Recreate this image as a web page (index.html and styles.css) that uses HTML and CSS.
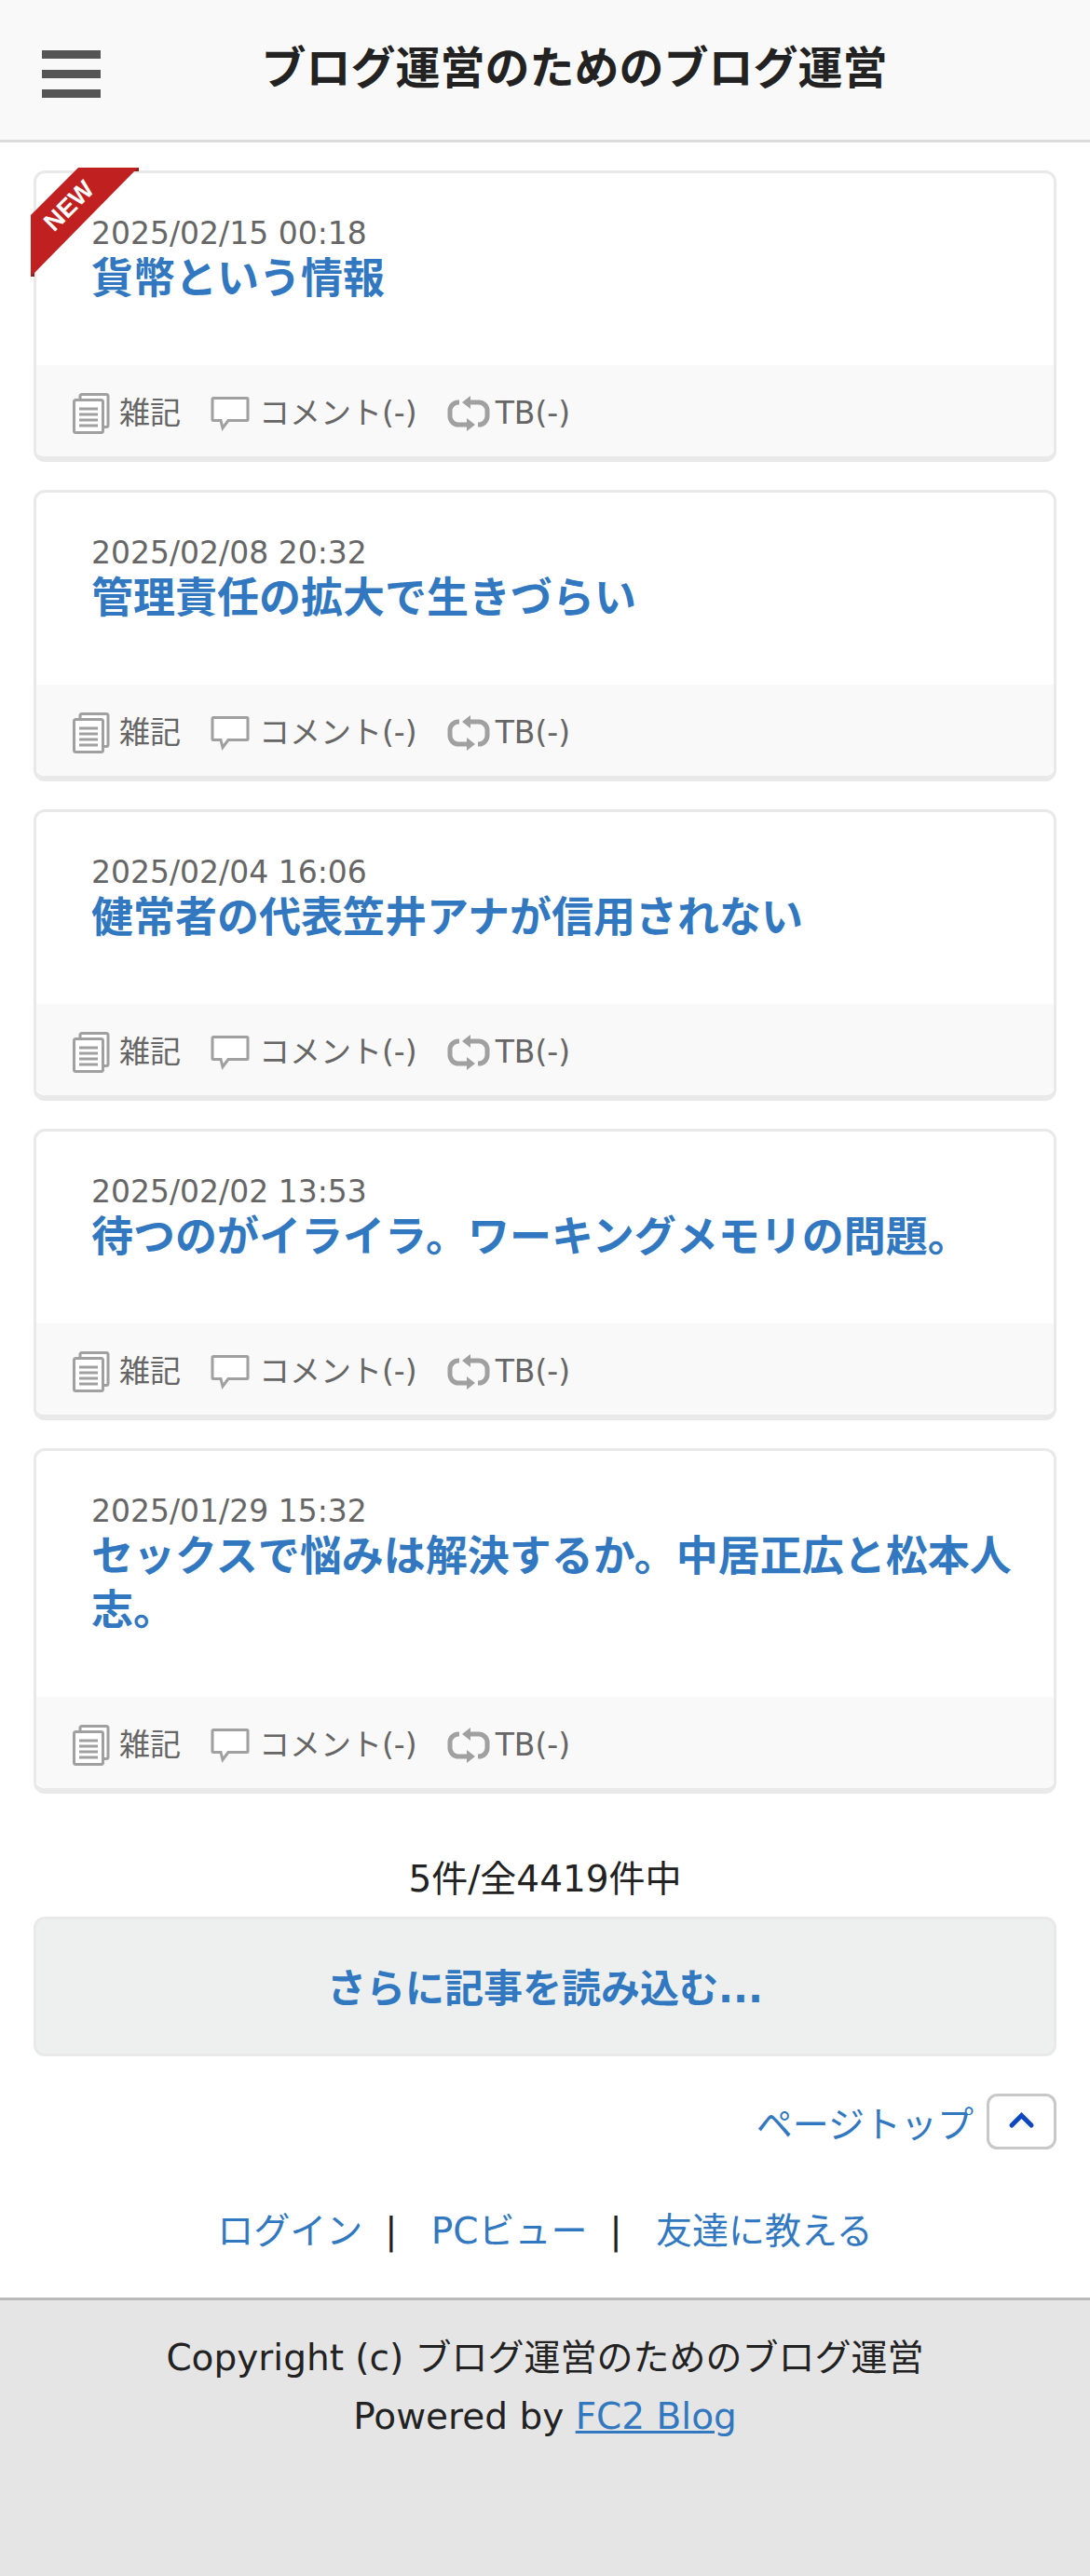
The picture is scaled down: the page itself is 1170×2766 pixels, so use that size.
FILE: index.html
```html
<!DOCTYPE html>
<html lang="ja">
<head>
  <meta charset="UTF-8">
  <meta name="viewport" content="width=device-width, initial-scale=1">
  <title>ブログ運営のためのブログ運営</title>
  <link rel="stylesheet" href="styles.css">
</head>
<body>
  <!-- icons -->
  <svg class="sprite" aria-hidden="true">
    <symbol id="icon-pages" viewBox="0 0 40 44">
      <path d="M8 6V3.5a2 2 0 0 1 2-2h26a2 2 0 0 1 2 2v31a2 2 0 0 1-2 2h-4" fill="#fff" stroke="#a0a0a0" stroke-width="3"/>
      <rect x="1.5" y="7.5" width="31" height="35" rx="2" fill="#fff" stroke="#a0a0a0" stroke-width="3"/>
      <path d="M7 17h20M7 23h20M7 29h20M7 35h20" stroke="#a0a0a0" stroke-width="3"/>
    </symbol>
    <symbol id="icon-comment" viewBox="0 0 42 38">
      <path d="M3 2.500h36a1 1 0 0 1 1 1v22a1 1 0 0 1-1 1H19l-6 8-2-8H3a1 1 0 0 1-1-1v-22a1 1 0 0 1 1-1z" fill="#fff" stroke="#a0a0a0" stroke-width="3"/>
    </symbol>
    <symbol id="icon-trackback" viewBox="0 0 46 38">
      <path d="M13 7h-1a9 9 0 0 0-9 9v6a9 9 0 0 0 9 9h9M33 31h1a9 9 0 0 0 9-9v-6a9 9 0 0 0-9-9h-9" fill="none" stroke="#a0a0a0" stroke-width="5"/>
      <path d="M16 7l9-7v14zM30 31l-9-7v14z" fill="#a0a0a0"/>
    </symbol>
  </svg>

  <header class="header">
    <button class="menu-btn" type="button" aria-label="メニュー">
      <span class="bar"></span>
      <span class="bar"></span>
      <span class="bar"></span>
    </button>
    <h1 class="blog-title">ブログ運営のためのブログ運営</h1>
  </header>

  <main class="main">
    <article class="entry">
      <svg class="new" viewBox="0 0 116 117">
        <path d="M108 0h8v4h-8zM0 109h4v8h-4z" fill="#8c2020"/>
        <path d="M51 0h64L4 113l-4 3V51z" fill="#c12020"/>
        <text x="41" y="50" transform="rotate(-45 41 41)" text-anchor="middle">NEW</text>
      </svg>
      <div class="entry-body">
        <time class="date">2025/02/15 00:18</time>
        <h2 class="entry-title"><a href="#">貨幣という情報</a></h2>
      </div>
      <ul class="entry-info">
        <li><svg class="icon pages"><use href="#icon-pages"/></svg>雑記</li>
        <li><svg class="icon comment"><use href="#icon-comment"/></svg>コメント(-)</li>
        <li><svg class="icon trackback"><use href="#icon-trackback"/></svg>TB(-)</li>
      </ul>
    </article>

    <article class="entry">
      <div class="entry-body">
        <time class="date">2025/02/08 20:32</time>
        <h2 class="entry-title"><a href="#">管理責任の拡大で生きづらい</a></h2>
      </div>
      <ul class="entry-info">
        <li><svg class="icon pages"><use href="#icon-pages"/></svg>雑記</li>
        <li><svg class="icon comment"><use href="#icon-comment"/></svg>コメント(-)</li>
        <li><svg class="icon trackback"><use href="#icon-trackback"/></svg>TB(-)</li>
      </ul>
    </article>

    <article class="entry">
      <div class="entry-body">
        <time class="date">2025/02/04 16:06</time>
        <h2 class="entry-title"><a href="#">健常者の代表笠井アナが信用されない</a></h2>
      </div>
      <ul class="entry-info">
        <li><svg class="icon pages"><use href="#icon-pages"/></svg>雑記</li>
        <li><svg class="icon comment"><use href="#icon-comment"/></svg>コメント(-)</li>
        <li><svg class="icon trackback"><use href="#icon-trackback"/></svg>TB(-)</li>
      </ul>
    </article>

    <article class="entry">
      <div class="entry-body">
        <time class="date">2025/02/02 13:53</time>
        <h2 class="entry-title"><a href="#">待つのがイライラ。ワーキングメモリの問題。</a></h2>
      </div>
      <ul class="entry-info">
        <li><svg class="icon pages"><use href="#icon-pages"/></svg>雑記</li>
        <li><svg class="icon comment"><use href="#icon-comment"/></svg>コメント(-)</li>
        <li><svg class="icon trackback"><use href="#icon-trackback"/></svg>TB(-)</li>
      </ul>
    </article>

    <article class="entry">
      <div class="entry-body">
        <time class="date">2025/01/29 15:32</time>
        <h2 class="entry-title"><a href="#">セックスで悩みは解決するか。中居正広と松本人志。</a></h2>
      </div>
      <ul class="entry-info">
        <li><svg class="icon pages"><use href="#icon-pages"/></svg>雑記</li>
        <li><svg class="icon comment"><use href="#icon-comment"/></svg>コメント(-)</li>
        <li><svg class="icon trackback"><use href="#icon-trackback"/></svg>TB(-)</li>
      </ul>
    </article>

    <p class="count">5件/全4419件中</p>
    <button class="more-btn" type="button">さらに記事を読み込む...</button>

    <a class="page-top" href="#">
      ページトップ
      <svg class="page-top-icon" viewBox="0 0 75 60">
        <rect x="1.5" y="1.5" width="72" height="57" rx="10" fill="#fff" stroke="#c8c8c8" stroke-width="3"/>
        <path d="M27 34l10.500-10.500L48 34" fill="none" stroke="#0d47c0" stroke-width="5" stroke-linecap="round"/>
      </svg>
    </a>
  </main>

  <nav class="links">
    <a href="#">ログイン</a><span class="sep">|</span>
    <a href="#">PCビュー</a><span class="sep">|</span>
    <a href="#">友達に教える</a>
  </nav>

  <footer class="footer">
    <p>Copyright (c) ブログ運営のためのブログ運営</p>
    <p>Powered by <a href="#">FC2 Blog</a></p>
  </footer>
</body>
</html>
```

FILE: styles.css
```css
* {
  box-sizing: border-box;
}
body {
  margin: 0;
  min-height: 100vh;
  display: flex;
  flex-direction: column;
  background: #fff;
  color: #222;
  font-family: "DejaVu Sans", "Noto Sans CJK JP", sans-serif;
  font-size: 39px;
  line-height: 63px;
}
h1, h2, p, ul {
  margin: 0;
  padding: 0;
}
a {
  color: #3178c0;
  text-decoration: none;
}
.sprite {
  position: absolute;
  width: 0;
  height: 0;
}

/* header */
.header {
  display: grid;
  grid-template-columns: 153px 1fr 90px;
  background: #f9f9f9;
  border-bottom: 3px solid #dcdcdc;
}
.menu-btn {
  display: flex;
  flex-direction: column;
  gap: 12px;
  padding: 54px 45px 45px;
  background: none;
  border: none;
  cursor: pointer;
}
.bar {
  width: 63px;
  height: 9px;
  background: #555;
}
.blog-title {
  padding-top: 43px;
  font-size: 48px;
  line-height: 60px;
  text-align: center;
}

/* entries */
.main {
  display: flex;
  flex-direction: column;
  gap: 30px;
  padding: 30px 36px;
}
.entry {
  position: relative;
  border: 3px solid #e9e9e9;
  border-bottom-width: 6px;
  border-radius: 12px;
}
.new {
  position: absolute;
  top: -6px;
  left: -6px;
  width: 116px;
  height: 117px;
}
.new text {
  fill: #fff;
  font: bold 27px "Liberation Sans", sans-serif;
}
.entry-body {
  padding: 44px 36px 63px 59px;
}
.date {
  display: block;
  color: #666;
  font-size: 33px;
  line-height: 41px;
}
.entry-title {
  font-size: 45px;
  line-height: 58px;
}
.entry-info {
  display: flex;
  gap: 32px;
  padding: 28px 36px 22px 39px;
  background: #f9f9f9;
  border-radius: 0 0 9px 9px;
  color: #666;
  font-size: 33px;
  line-height: 48px;
  list-style: none;
}
.entry-info li {
  display: flex;
  align-items: center;
}
.icon {
  margin-right: 10px;
}
.pages {
  width: 40px;
  height: 44px;
}
.comment {
  width: 42px;
  height: 38px;
}
.trackback {
  width: 46px;
  height: 38px;
  margin-right: 6px;
}

/* bottom of the list */
.count {
  margin-top: 30px;
  text-align: center;
}
.more-btn {
  height: 150px;
  margin-top: -21px;
  padding-top: 6px;
  background: #edf0ef;
  border: 3px solid #e8e9e8;
  border-radius: 12px;
  color: #3178c0;
  font: inherit;
  font-size: 42px;
  font-weight: bold;
  cursor: pointer;
}
.page-top {
  display: flex;
  align-items: flex-start;
  align-self: flex-end;
  gap: 14px;
  margin-top: 10px;
  line-height: 68px;
}
.page-top-icon {
  width: 75px;
  height: 60px;
}

/* footer */
.links {
  padding: 18px 36px 40px;
  text-align: center;
}
.sep {
  margin: 0 24px;
}
.footer {
  flex: 1;
  padding: 30px 36px;
  background: #e5e5e5;
  border-top: 3px solid #b9b9b9;
  text-align: center;
}
.footer a {
  text-decoration: underline;
}
```
